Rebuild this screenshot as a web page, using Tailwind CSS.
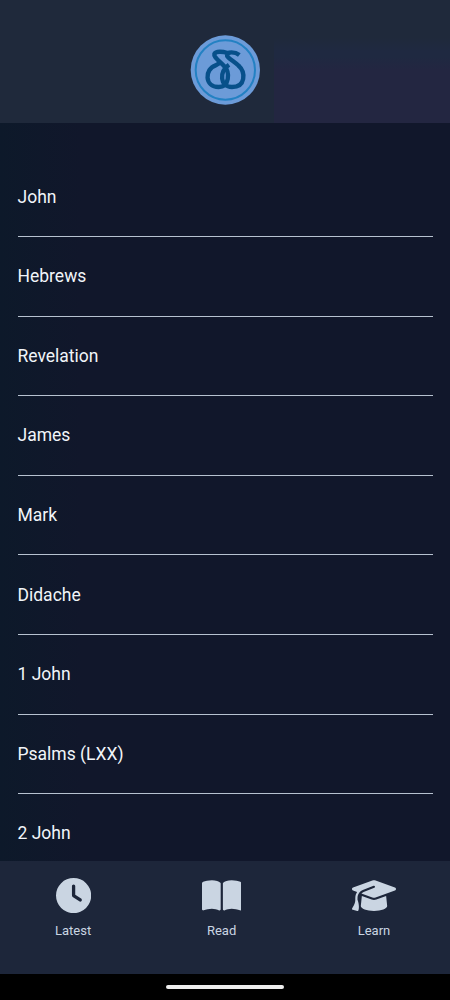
<!DOCTYPE html>
<html lang="en">
<head>
  <meta charset="UTF-8" />
  <title>Read</title>
  <meta name="viewport" content="width=device-width, initial-scale=1.0" />
  <script src="https://cdn.jsdelivr.net/npm/@tailwindcss/browser@4"></script>
</head>
<body class="h-[1000px] flex flex-col overflow-hidden bg-[#10172a] font-['Roboto',sans-serif] text-slate-100">

  <!-- Header -->
  <header class="h-[123px] shrink-0 flex justify-center pt-[35px] bg-[#1f293b] bg-[linear-gradient(#1f293b,#1f2941_15%,#1f2941_22%,#232641_38%)] bg-[size:176px_85px] bg-right-bottom bg-no-repeat">
    <svg class="size-[70px]" viewBox="31 30 210 210" fill="none">
      <circle cx="137" cy="135" r="104" fill="#6c9bd8" />
      <circle cx="137" cy="135" r="89" stroke="#2381c3" stroke-width="6" />
      <g stroke="#07508a" stroke-width="13" stroke-linejoin="round">
        <path d="M134 124C151 142 150 186 117 186C74 186 74 132 108 121L122 113" />
        <path d="M176 121C199 142 198 186 157 186C120 186 118 140 148 119" />
        <path d="M145 84C129 80 108 78 104 87C101 97 120 108 136 126" />
        <path d="M179 90C165 79 143 81 142 88C140 98 160 106 178 123" />
      </g>
    </svg>
  </header>

  <!-- Book list -->
  <main class="flex-1 min-h-0 overflow-hidden pl-[17.5px] pr-[17px] pt-[34.4px] text-[17.5px] bg-[linear-gradient(90deg,#0d192a,#11172b_18%)]">
    <ul>
      <li class="h-[79.6px] flex items-center border-b border-slate-300/90">John</li>
      <li class="h-[79.6px] flex items-center border-b border-slate-300/90">Hebrews</li>
      <li class="h-[79.6px] flex items-center border-b border-slate-300/90">Revelation</li>
      <li class="h-[79.6px] flex items-center border-b border-slate-300/90">James</li>
      <li class="h-[79.6px] flex items-center border-b border-slate-300/90">Mark</li>
      <li class="h-[79.6px] flex items-center border-b border-slate-300/90">Didache</li>
      <li class="h-[79.6px] flex items-center border-b border-slate-300/90">1 John</li>
      <li class="h-[79.6px] flex items-center border-b border-slate-300/90">Psalms (LXX)</li>
      <li class="h-[79.6px] flex items-center border-b border-slate-300/90">2 John</li>
    </ul>
  </main>

  <!-- Bottom tabs -->
  <nav class="h-[113px] shrink-0 flex justify-between items-start pl-[55px] pr-[54px] pt-[17px] bg-[#1d263a] text-[13px] text-slate-300">
    <a class="flex flex-col items-center gap-[8px]">
      <svg class="h-[35.2px]" viewBox="0 0 512 512" fill="currentColor"><path d="M256 0a256 256 0 1 1 0 512A256 256 0 1 1 256 0zM232 120V256c0 8 4 15.5 10.7 20l96 64c11 7.4 25.9 4.4 33.3-6.7s4.4-25.9-6.7-33.3L280 243.2V120c0-13.3-10.7-24-24-24s-24 10.7-24 24z" /></svg>
      <span class="leading-5">Latest</span>
    </a>
    <a class="flex flex-col items-center gap-[8px]">
      <svg class="h-[35.2px]" viewBox="0 0 576 512" fill="currentColor"><path d="M249.6 471.5c10.8 3.8 22.4-4.1 22.4-15.5V78.6c0-4.2-1.6-8.4-5-11C247.4 52 202.4 32 144 32C93.5 32 46.3 45.3 18.1 56.1C6.8 60.5 0 71.7 0 83.8V454.1c0 11.9 12.8 20.2 24.1 16.5C55.6 460.1 105.5 448 144 448c33.9 0 79 14 105.6 23.5zm76.8 0C353 462 398.1 448 432 448c38.5 0 88.4 12.1 119.9 22.6c11.3 3.8 24.1-4.6 24.1-16.5V83.8c0-12.1-6.8-23.3-18.1-27.6C529.7 45.3 482.5 32 432 32c-58.4 0-103.4 20-123 35.6c-3.3 2.6-5 6.8-5 11V456c0 11.4 11.7 19.3 22.4 15.5z" /></svg>
      <span class="leading-5">Read</span>
    </a>
    <a class="flex flex-col items-center gap-[8px]">
      <svg class="h-[35.2px]" viewBox="0 0 640 512" fill="currentColor"><path d="M320 32c-8.1 0-16.1 1.4-23.7 4.1L15.8 137.4C6.3 140.9 0 149.9 0 160s6.3 19.1 15.8 22.6l57.9 20.9C57.3 229.3 48 259.8 48 291.9v28.1c0 28.4-10.8 57.7-22.3 80.8c-6.5 13-13.9 25.8-22.5 37.6C0 442.7-.9 448.3 .9 453.4s6 8.9 11.2 10.2l64 16c4.2 1.1 8.7 .3 12.4-2s6.3-6.1 7.1-10.4c8.6-42.8 4.3-81.2-2.1-108.7C90.3 344.3 86 329.8 80 316.5V291.9c0-30.2 10.2-58.7 27.9-81.5c12.9-15.5 29.6-28 49.2-35.7l157-61.7c8.2-3.2 17.5 .8 20.7 9s-.8 17.5-9 20.7l-157 61.7c-12.4 4.9-23.3 12.4-32.2 21.6l159.6 57.6c7.6 2.7 15.6 4.1 23.7 4.1s16.1-1.4 23.7-4.1L624.2 182.6c9.5-3.4 15.8-12.5 15.8-22.6s-6.3-19.1-15.8-22.6L343.7 36.1C336.1 33.4 328.1 32 320 32zM128 408c0 35.3 86 72 192 72s192-36.7 192-72L496.7 262.6 354.5 314c-11.1 4-22.8 6-34.5 6s-23.5-2-34.5-6L143.3 262.6 128 408z" /></svg>
      <span class="leading-5">Learn</span>
    </a>
  </nav>

  <!-- Home indicator -->
  <div class="h-[26px] shrink-0 flex justify-center pt-[11px] bg-black">
    <div class="w-[118px] h-[4px] rounded-full bg-[#eeeeee]"></div>
  </div>

</body>
</html>
